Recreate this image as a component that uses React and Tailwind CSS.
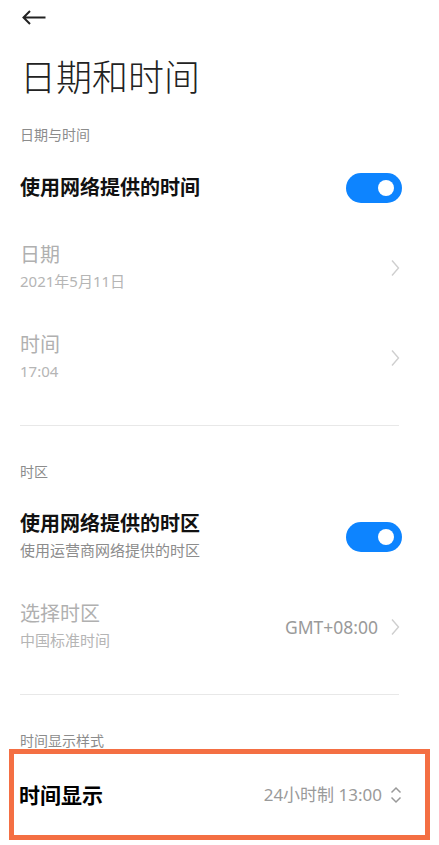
import { useState } from "react";

const font = { fontFamily: '"Noto Sans", "Noto Sans CJK SC", sans-serif' };

function Toggle({ on, onClick }) {
  return (
    <button
      onClick={onClick}
      className={`relative w-[56px] h-[30px] rounded-full shrink-0 ${on ? "bg-[#0d84ff]" : "bg-[#d6d6d6]"}`}
    >
      <span
        className={`absolute top-[7px] w-[16px] h-[16px] rounded-full bg-white ${on ? "left-[32px]" : "left-[8px]"}`}
      />
    </button>
  );
}

function Chevron() {
  return (
    <svg width="9" height="18" viewBox="0 0 9 18" className="shrink-0">
      <path d="M1 1.5 L7.5 9 L1 16.5" fill="none" stroke="#cfcfcf" strokeWidth="1.4" />
    </svg>
  );
}

function Label({ children, className = "" }) {
  return <div className={`text-[14px] leading-[20px] text-[#8c8c8c] ${className}`}>{children}</div>;
}

function TwoLine({ title, sub, right, className = "" }) {
  return (
    <div className={`flex items-center justify-between pr-[19px] ${className}`}>
      <div>
        <div className="text-[20px] leading-[26px] text-[#b0b0b0]">{title}</div>
        <div className="text-[15px] leading-[26px] text-[#b5b5b5]">{sub}</div>
      </div>
      <div className="flex items-center gap-[13px]">
        {right}
        <Chevron />
      </div>
    </div>
  );
}

export default function App() {
  const [netTime, setNetTime] = useState(true);
  const [netZone, setNetZone] = useState(true);

  return (
    <div className="w-[439px] h-[845px] bg-white overflow-hidden" style={font}>
      {/* 返回 */}
      <div className="h-[36px] pl-[22px] pt-[10px]">
        <svg width="24" height="15" viewBox="0 0 24 15">
          <path d="M8 1 L1.5 7.5 L8 14 M1.5 7.5 H23.5" fill="none" stroke="#222" strokeWidth="2" />
        </svg>
      </div>

      <div className="px-[20px]">
        <h1 className="mt-[22px] text-[36px] leading-[40px] font-light text-[#222]">日期和时间</h1>

        <Label className="mt-[27px]">日期与时间</Label>

        <div className="mt-[28px] flex items-center justify-between pr-[17px]">
          <div className="text-[20px] leading-[26px] font-bold text-[#111]">使用网络提供的时间</div>
          <Toggle on={netTime} onClick={() => setNetTime(!netTime)} />
        </div>

        <TwoLine className="mt-[39px]" title="日期" sub="2021年5月11日" />
        <TwoLine className="mt-[38px]" title="时间" sub="17:04" />

        <div className="mt-[41px] mr-[20px] h-px bg-[#e8e8e8]" />

        <Label className="mt-[36px]">时区</Label>

        <div className="mt-[29px] flex items-center justify-between pr-[17px]">
          <div>
            <div className="text-[20px] leading-[26px] font-bold text-[#111]">使用网络提供的时区</div>
            <div className="text-[15px] leading-[26px] text-[#8c8c8c]">使用运营商网络提供的时区</div>
          </div>
          <Toggle on={netZone} onClick={() => setNetZone(!netZone)} />
        </div>

        <TwoLine
          className="mt-[38px]"
          title="选择时区"
          sub="中国标准时间"
          right={<span className="text-[17.5px] text-[#9a9a9a]">GMT+08:00</span>}
        />

        <div className="mt-[41px] mr-[20px] h-px bg-[#e8e8e8]" />

        <Label className="mt-[36px]">时间显示样式</Label>
      </div>

      <div className="mt-[-2px] mx-[9px] h-[91px] border-[5px] border-[#f46f43] flex items-center justify-between pl-[5px] pr-[23px]">
        <div className="text-[21px] leading-[28px] font-bold text-[#000]">时间显示</div>
        <div className="flex items-center gap-[8px]">
          <span className="text-[17px] text-[#9a9a9a]">24小时制 13:00</span>
          <svg width="12" height="18" viewBox="0 0 12 18">
            <path d="M1.5 6.5 L6 2 L10.5 6.5 M1.5 11.5 L6 16 L10.5 11.5" fill="none" stroke="#999" strokeWidth="1.5" />
          </svg>
        </div>
      </div>
    </div>
  );
}
